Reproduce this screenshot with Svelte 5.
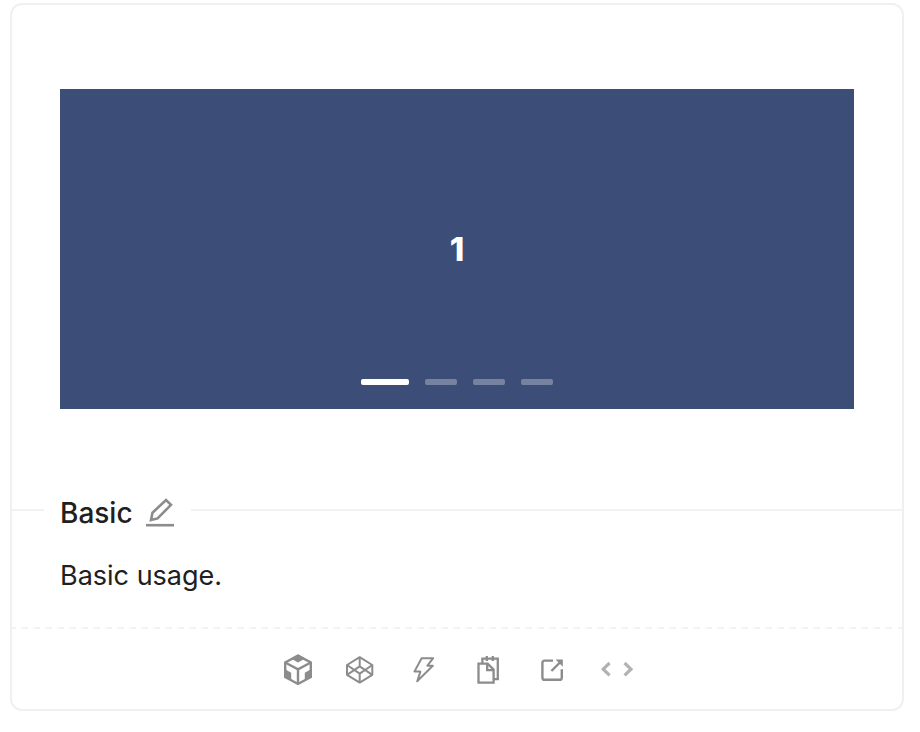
<script>
  const slides = [1, 2, 3, 4];
  let current = $state(0);
</script>

<section class="card">
  <div class="demo">
    <div class="carousel">
      <h3>{slides[current]}</h3>
      <div class="dots">
        {#each slides as slide, i}
          <button
            class="dot"
            class:active={i === current}
            aria-label={`Slide ${slide}`}
            onclick={() => (current = i)}
          ></button>
        {/each}
      </div>
    </div>
  </div>

  <div class="heading">
    <h2>Basic</h2>
    <a class="edit" href="#edit" aria-label="Edit this demo">
      <svg viewBox="0 0 30 30" fill="none" stroke="currentColor" stroke-width="2.6">
        <path d="M6 22 7.5 14.7 21 2 26 6.8 12.6 20.4Z" />
        <path d="M1 27.2H29" />
      </svg>
    </a>
  </div>
  <p class="description">Basic usage.</p>

  <div class="actions">
    <button aria-label="Open in CodeSandbox">
      <svg viewBox="0 0 32 32" fill="none" stroke="currentColor" stroke-width="2.4">
        <path d="M17 1.6 29.8 8.5V23L17 30 4.2 23V8.5Z" />
        <path d="M4.2 8.5 17 15.3 29.8 8.5M17 15.3V30" />
        <path
          d="M17 .5 24.2 4.4 17 8.4 9.8 4.4ZM4 15.2 10.2 18.7V26.2L4 23ZM30 15.2 23.8 18.7V26.2L30 23Z"
          fill="currentColor"
          stroke="none"
        />
      </svg>
    </button>
    <button aria-label="Open in CodePen">
      <svg viewBox="0 0 32 32" fill="none" stroke="currentColor" stroke-width="2" stroke-linejoin="round">
        <path d="M14.7 3.2 27.3 11V20.8L14.7 28.6 2 20.8V11Z" />
        <path d="M2 11 14.7 19.6 27.3 11M2 20.8 14.7 12.4 27.3 20.8M14.7 3.2V12.4M14.7 19.6V28.6" />
      </svg>
    </button>
    <button aria-label="Open in StackBlitz">
      <svg viewBox="0 0 32 32" fill="none" stroke="currentColor" stroke-width="2" stroke-linejoin="round">
        <path d="M12.6 4.2H24.2L18.4 11.7H23.8L8.2 27.2 11.4 17.6H5.4Z" />
      </svg>
    </button>
    <button aria-label="Copy code">
      <svg viewBox="0 0 32 32" fill="none" stroke="currentColor" stroke-width="2.3">
        <path d="M5.5 9.6H14.6L20.6 15.6V28.7H5.5Z" />
        <path d="M14.2 9.6V16.2H20.6" />
        <path d="M9.4 9.6V4.6H24.8V25.2H20.6M13.8 2V7M19.8 2V7" />
      </svg>
    </button>
    <button aria-label="Open in a new tab">
      <svg viewBox="0 0 32 32" fill="none" stroke="currentColor" stroke-width="2.4">
        <path d="M16 6.6H7.8Q5.4 6.6 5.4 9V23.4Q5.4 25.8 7.8 25.8H22.4Q24.8 25.8 24.8 23.4V15.2" />
        <path d="M14.4 17 23.4 8" />
        <path d="M18.6 5.6H25.8V12.8Z" fill="currentColor" stroke="none" />
      </svg>
    </button>
    <button class="code" aria-label="Show code">
      <svg viewBox="0 0 32 32" fill="none" stroke="currentColor" stroke-width="3.2">
        <path d="M8.6 9 2.2 15.2 8.6 21.4M23.6 9 30 15.2 23.6 21.4" />
      </svg>
    </button>
  </div>
</section>

<style>
  :global(body) {
    background: #fff;
  }

  .card {
    margin: 3px 16px 20px 10px;
    border: 2px solid #f0f0f0;
    border-radius: 12px;
    color: #202020;
    font: 400 27px/44px Inter, "Liberation Sans", sans-serif;
  }

  .demo {
    padding: 84px 48px 82px;
  }

  .carousel {
    display: grid;
    position: relative;
    height: 320px;
    place-items: center;
    background: #3c4d77;
    color: #fff;
  }

  h3 {
    margin: 0;
    font-size: 33px;
    font-weight: 800;
  }

  .dots {
    display: flex;
    position: absolute;
    right: 0;
    bottom: 24px;
    left: 0;
    justify-content: center;
    gap: 16px;
  }

  button {
    padding: 0;
    border: 0;
    background: none;
    cursor: pointer;
  }

  .dot {
    width: 32px;
    height: 6px;
    border-radius: 2px;
    background: #fff;
    opacity: 0.3;
  }

  .dot.active {
    width: 48px;
    opacity: 1;
  }

  .heading {
    display: flex;
    align-items: center;
  }

  .heading::before,
  .heading::after {
    width: 32px;
    height: 2px;
    margin-bottom: 6px;
    background: #f2f2f2;
    content: "";
  }

  .heading::after {
    flex: 1;
  }

  h2 {
    margin: 0;
    padding: 0 12px 0 16px;
    font-size: 28px;
    font-weight: 500;
  }

  .edit {
    width: 30px;
    height: 30px;
    margin-right: 16px;
    color: #8c8c8c;
  }

  svg {
    display: block;
    width: 100%;
    height: 100%;
  }

  .description {
    margin: 0;
    padding: 19px 48px 29px;
  }

  .actions {
    display: flex;
    justify-content: center;
    gap: 32px;
    padding: 27px 0 23px;
    background: repeating-linear-gradient(90deg, #f3f3f3 0 4px, transparent 4px 10px, #f3f3f3 10px 12px) top / 100% 2px no-repeat;
  }

  .actions button {
    width: 32px;
    height: 32px;
    color: #8c8c8c;
  }

  .actions .code {
    color: #b2b2b2;
  }
</style>
